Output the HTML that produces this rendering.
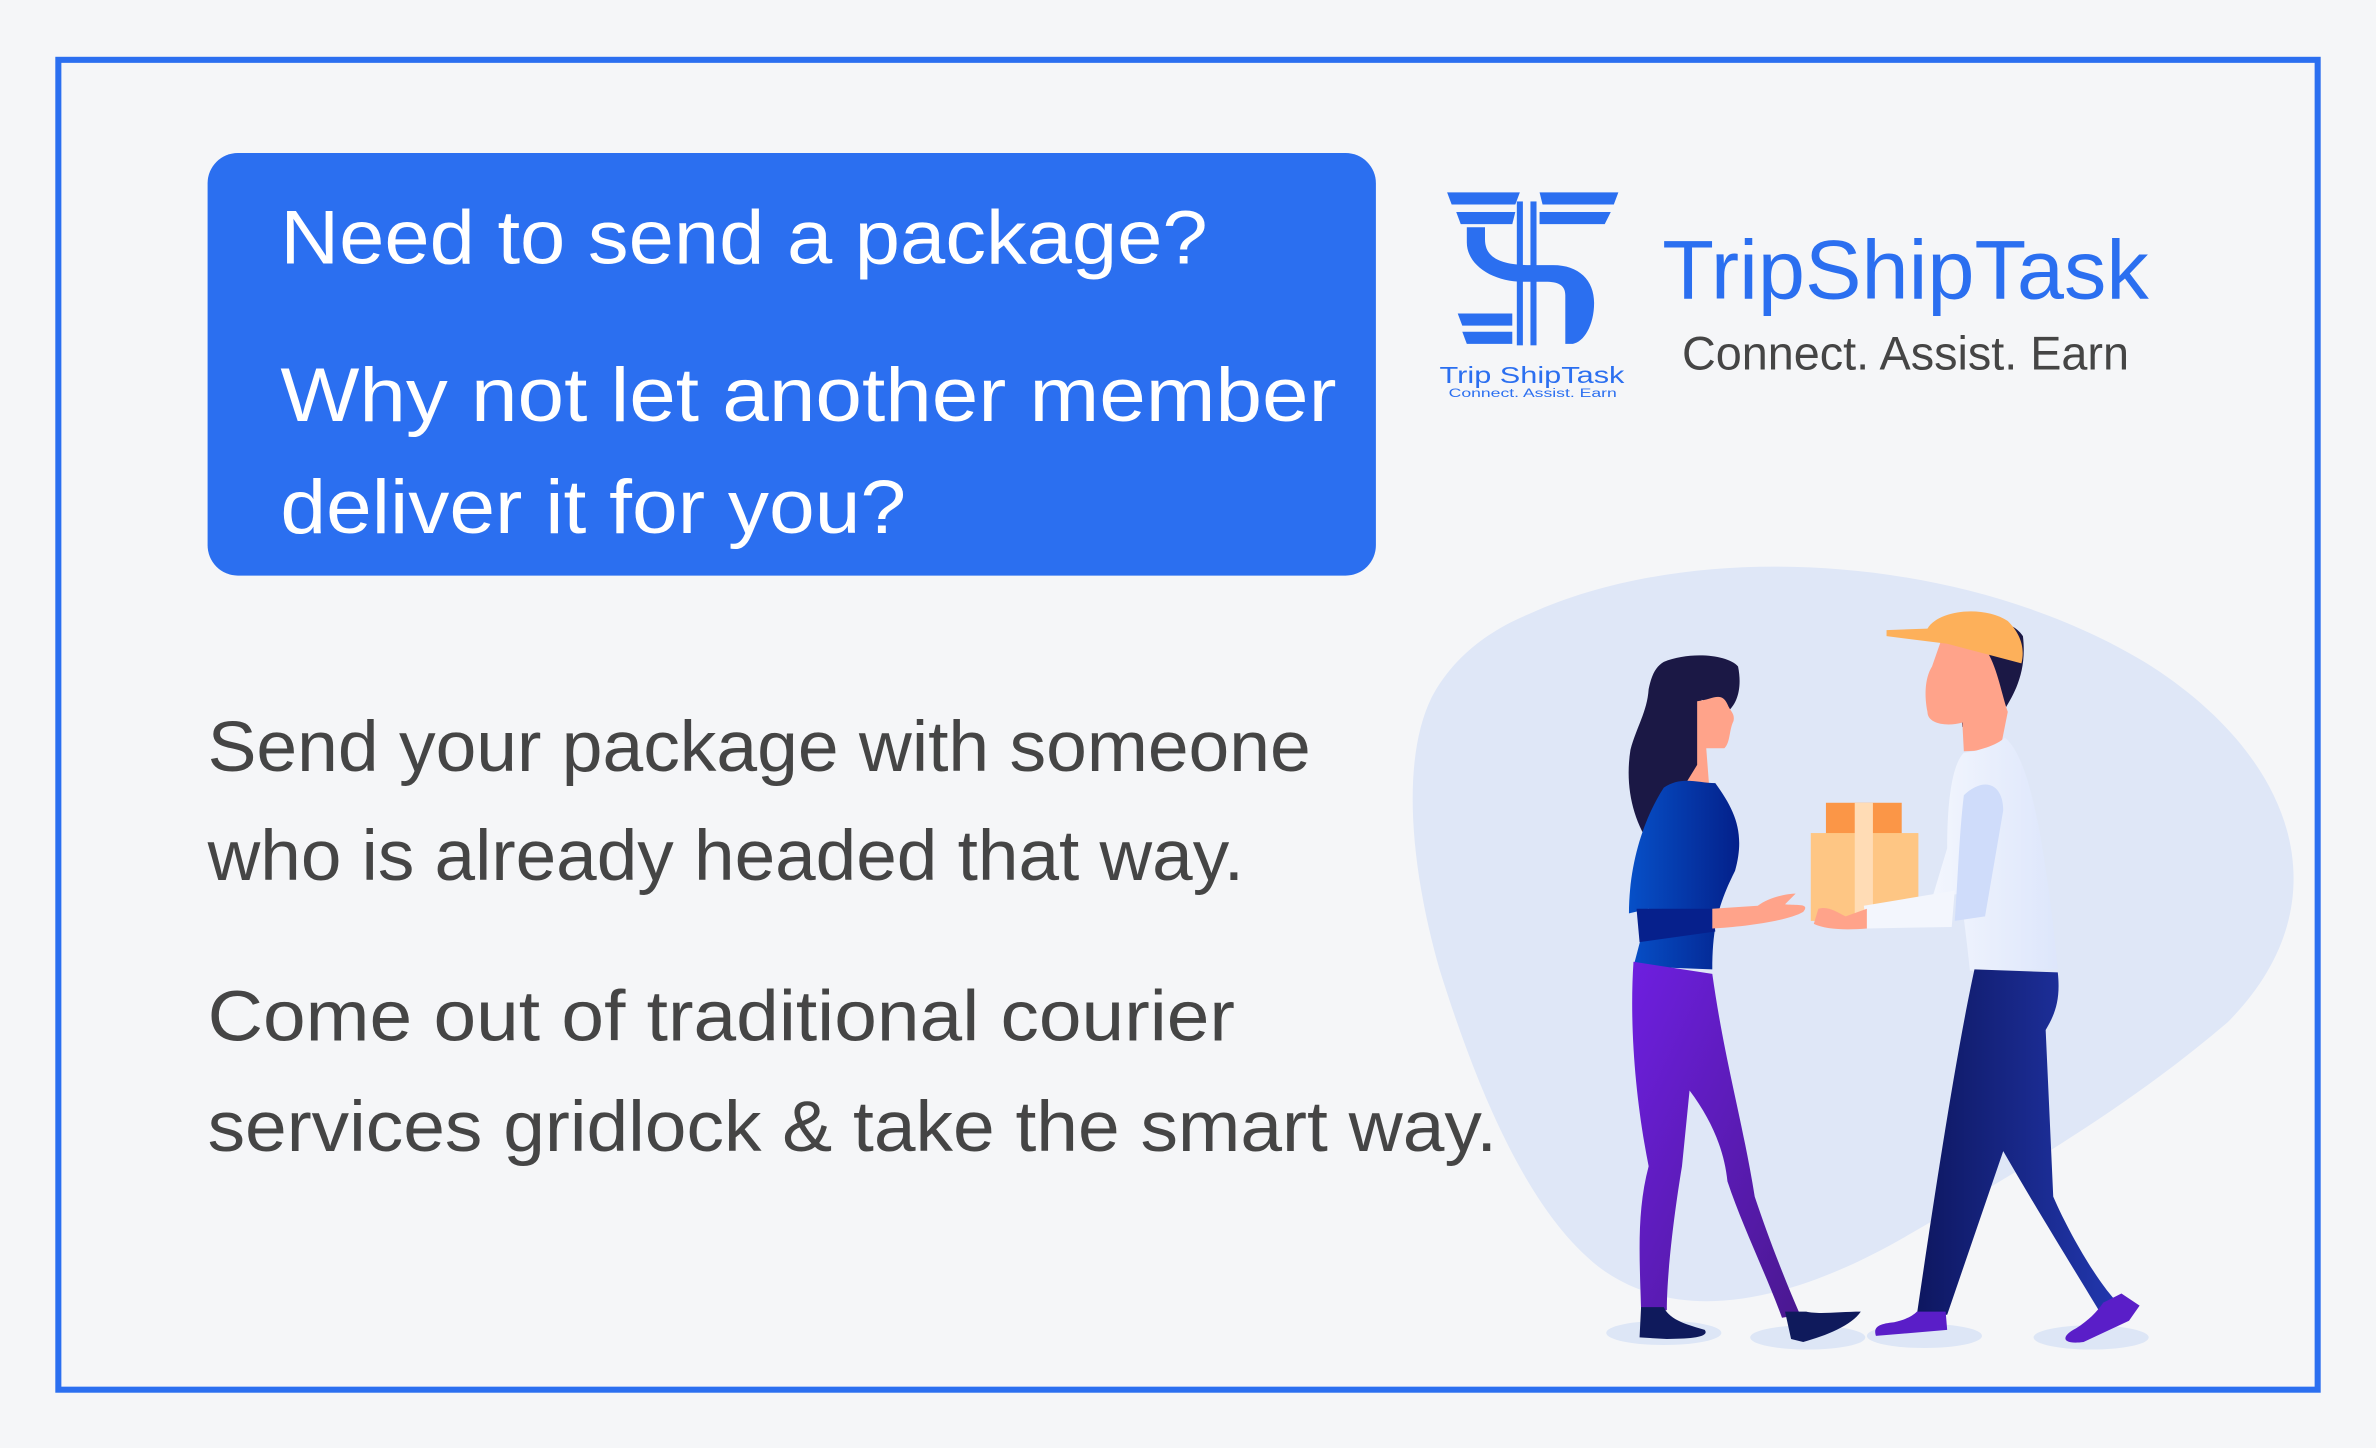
<!DOCTYPE html>
<html><head><meta charset="utf-8"><style>
html,body{margin:0;padding:0;background:#f5f6f8;}
svg{display:block;}
text{font-family:"Liberation Sans",sans-serif;}
</style></head><body>
<svg width="2376" height="1448" viewBox="0 0 1568 956" xmlns="http://www.w3.org/2000/svg" preserveAspectRatio="none">
<defs>
<linearGradient id="leg" x1="0" y1="0" x2="1" y2="1"><stop offset="0" stop-color="#6e1fe0"/><stop offset="1" stop-color="#4a1890"/></linearGradient>
<linearGradient id="pant" x1="0" y1="0" x2="1" y2="0"><stop offset="0" stop-color="#0e1760"/><stop offset="1" stop-color="#2238b0"/></linearGradient>
<linearGradient id="top" x1="0" y1="0" x2="1" y2="0"><stop offset="0" stop-color="#0650c8"/><stop offset="1" stop-color="#04208a"/></linearGradient>
<linearGradient id="shirt" x1="0" y1="0" x2="1" y2="0"><stop offset="0" stop-color="#ffffff"/><stop offset="1" stop-color="#dde6fb"/></linearGradient>
</defs>
<rect width="1568" height="956" fill="#f5f6f8"/>
<rect x="38.5" y="39.5" width="1491" height="878" fill="none" stroke="#2b6ff0" stroke-width="4"/>
<rect x="137" y="101" width="771" height="279" rx="20" fill="#2b6ff0"/>
<g fill="#fff" font-size="50">
<text x="185" y="174" textLength="612" lengthAdjust="spacingAndGlyphs">Need to send a package?</text>
<text x="185" y="278" textLength="697" lengthAdjust="spacingAndGlyphs">Why not let another member</text>
<text x="185" y="352" textLength="413" lengthAdjust="spacingAndGlyphs">deliver it for you?</text>
</g>
<g fill="#454545" font-size="47">
<text x="137" y="509" textLength="728" lengthAdjust="spacingAndGlyphs">Send your package with someone</text>
<text x="137" y="581" textLength="684" lengthAdjust="spacingAndGlyphs">who is already headed that way.</text>
<text x="137" y="687" textLength="678" lengthAdjust="spacingAndGlyphs">Come out of traditional courier</text>
<text x="137" y="760" textLength="851" lengthAdjust="spacingAndGlyphs">services gridlock &amp; take the smart way.</text>
</g>
<!-- logo -->
<g fill="#2b6ff0">
<polygon points="955,127 1003,127 1000,135 958,135"/>
<polygon points="1016,127 1068,127 1065,135 1018,135"/>
<polygon points="961,140 1000,140 998,148 964,148"/>
<polygon points="1016,140 1063,140 1059,148 1016,148"/>
<rect x="1001" y="133" width="4" height="95"/>
<rect x="1010" y="133" width="4" height="95"/>
<path d="M968,150 L980,150 L980,158 C980,170 990,175 1010,175 L1025,175 C1042,175 1052,185 1052,200 C1052,215 1045,226 1038,227 L1033,227 L1033,195 C1033,188 1028,186 1020,186 L1005,186 C985,186 968,175 968,160 Z"/>
<polygon points="962,207 998,207 998,215 965,215"/>
<polygon points="965,219 998,219 998,227 968,227"/>
</g>
<text x="950" y="253" font-size="15" fill="#2b6ff0" textLength="122" lengthAdjust="spacingAndGlyphs">Trip ShipTask</text>
<text x="956" y="262" font-size="8" fill="#2b6ff0" textLength="111" lengthAdjust="spacingAndGlyphs">Connect. Assist. Earn</text>
<text x="1097" y="197" font-size="55" fill="#2b6ff0" textLength="321" lengthAdjust="spacingAndGlyphs">TripShipTask</text>
<text x="1110" y="244" font-size="31" fill="#454545" textLength="295" lengthAdjust="spacingAndGlyphs">Connect. Assist. Earn</text>
<!-- blob -->
<path d="M1010,405 C1120,355 1300,365 1420,440 C1520,505 1545,600 1470,675 C1400,735 1320,780 1260,815 C1200,850 1120,880 1060,840 C1010,805 975,720 950,640 C930,570 925,500 945,460 C960,432 985,415 1010,405 Z" fill="#dfe7f7"/>
<!-- shadows -->
<g fill="#dde6f6">
<ellipse cx="1098" cy="880" rx="38" ry="8"/><ellipse cx="1193" cy="883" rx="38" ry="8"/>
<ellipse cx="1270" cy="882" rx="38" ry="8"/><ellipse cx="1380" cy="883" rx="38" ry="8"/>
</g>
<!-- woman -->
<path d="M1098,437 C1115,430 1140,432 1147,440 C1150,455 1146,465 1140,470 L1123,462 L1121,520 L1098,525 C1095,545 1094,555 1093,563 C1078,545 1072,520 1076,495 C1080,480 1087,470 1088,455 C1090,445 1093,440 1098,437 Z" fill="#1b1845"/>
<path d="M1120,463 C1130,462 1136,456 1140,465 C1142,470 1145,471 1144,476 C1141,482 1142,490 1138,494 L1126,494 L1128,520 C1122,522 1115,520 1112,518 L1120,505 Z" fill="#ffa38a"/>
<path d="M1098,520 C1110,512 1120,517 1132,517 C1145,535 1152,550 1145,575 C1135,595 1130,610 1130,640 L1078,638 L1088,600 L1075,603 C1075,570 1085,540 1098,520 Z" fill="url(#top)"/>
<path d="M1080,600 L1130,600 L1132,615 L1082,622 Z" fill="#06208c"/>
<path d="M1130,600 L1160,598 C1168,592 1180,590 1185,590 L1178,597 C1185,598 1195,596 1190,602 C1180,608 1150,612 1130,613 Z" fill="#ffa38a"/>
<path d="M1078,635 L1130,643 C1138,700 1150,740 1158,790 C1168,820 1180,850 1188,868 L1176,870 C1165,840 1150,810 1140,780 C1138,760 1130,740 1115,720 L1110,770 C1105,800 1100,840 1100,865 L1083,865 C1082,830 1080,800 1088,770 C1080,730 1075,680 1078,635 Z" fill="url(#leg)"/>
<path d="M1083,863 L1098,863 C1102,872 1115,875 1125,878 C1128,882 1120,884 1100,884 L1082,883 Z" fill="#0f1a5c"/>
<path d="M1178,866 L1192,866 C1200,868 1215,866 1228,866 C1222,875 1205,882 1190,886 L1182,884 Z" fill="#0f1a5c"/>
<!-- box -->
<rect x="1205" y="530" width="50" height="22" fill="#fb9647"/>
<rect x="1195" y="550" width="71" height="58" fill="#fec684"/>
<rect x="1224" y="530" width="12" height="78" fill="#ffdcb5"/>
<!-- man -->
<path d="M1290,425 C1300,410 1325,405 1335,420 C1338,445 1328,460 1322,470 L1320,480 L1295,480 Z" fill="#1b1845"/>
<path d="M1282,420 L1310,428 C1318,440 1320,455 1325,470 L1320,495 L1296,496 L1295,477 C1285,480 1272,478 1272,470 C1270,460 1270,448 1275,440 Z" fill="#ffa38a"/>
<path d="M1272,415 C1280,402 1310,400 1325,410 C1335,420 1336,430 1334,438 L1285,425 L1245,420 L1245,416 Z" fill="#fdb05a"/>
<path d="M1296,497 C1305,496 1318,492 1323,487 C1340,500 1350,560 1358,640 L1300,641 C1298,620 1295,600 1294,590 L1232,598 L1228,612 L1270,610 L1285,560 C1285,530 1288,505 1296,497 Z" fill="url(#shirt)"/>
<path d="M1230,598 L1290,588 L1288,612 L1232,613 Z" fill="#f3f6fd"/>
<path d="M1296,525 C1310,512 1322,518 1322,535 L1310,605 L1290,608 C1292,580 1293,550 1296,525 Z" fill="#cfdcfa"/>
<path d="M1200,600 C1206,598 1212,602 1218,605 L1232,600 L1232,613 C1220,614 1205,614 1197,610 Z" fill="#ffa38a"/>
<path d="M1303,640 L1358,642 C1360,660 1356,670 1350,680 L1355,790 C1368,820 1390,855 1400,862 L1388,870 C1370,840 1345,800 1322,760 L1285,868 L1265,868 C1275,800 1290,700 1303,640 Z" fill="url(#pant)"/>
<path d="M1265,866 L1284,866 L1285,878 L1238,882 C1236,876 1240,874 1250,873 C1258,871 1262,869 1265,866 Z" fill="#5a1ec8"/>
<path d="M1388,860 L1400,854 L1412,862 L1405,872 L1375,886 C1360,888 1360,882 1370,877 C1378,872 1384,866 1388,860 Z" fill="#5a1ec8"/>
</svg>
</body></html>
